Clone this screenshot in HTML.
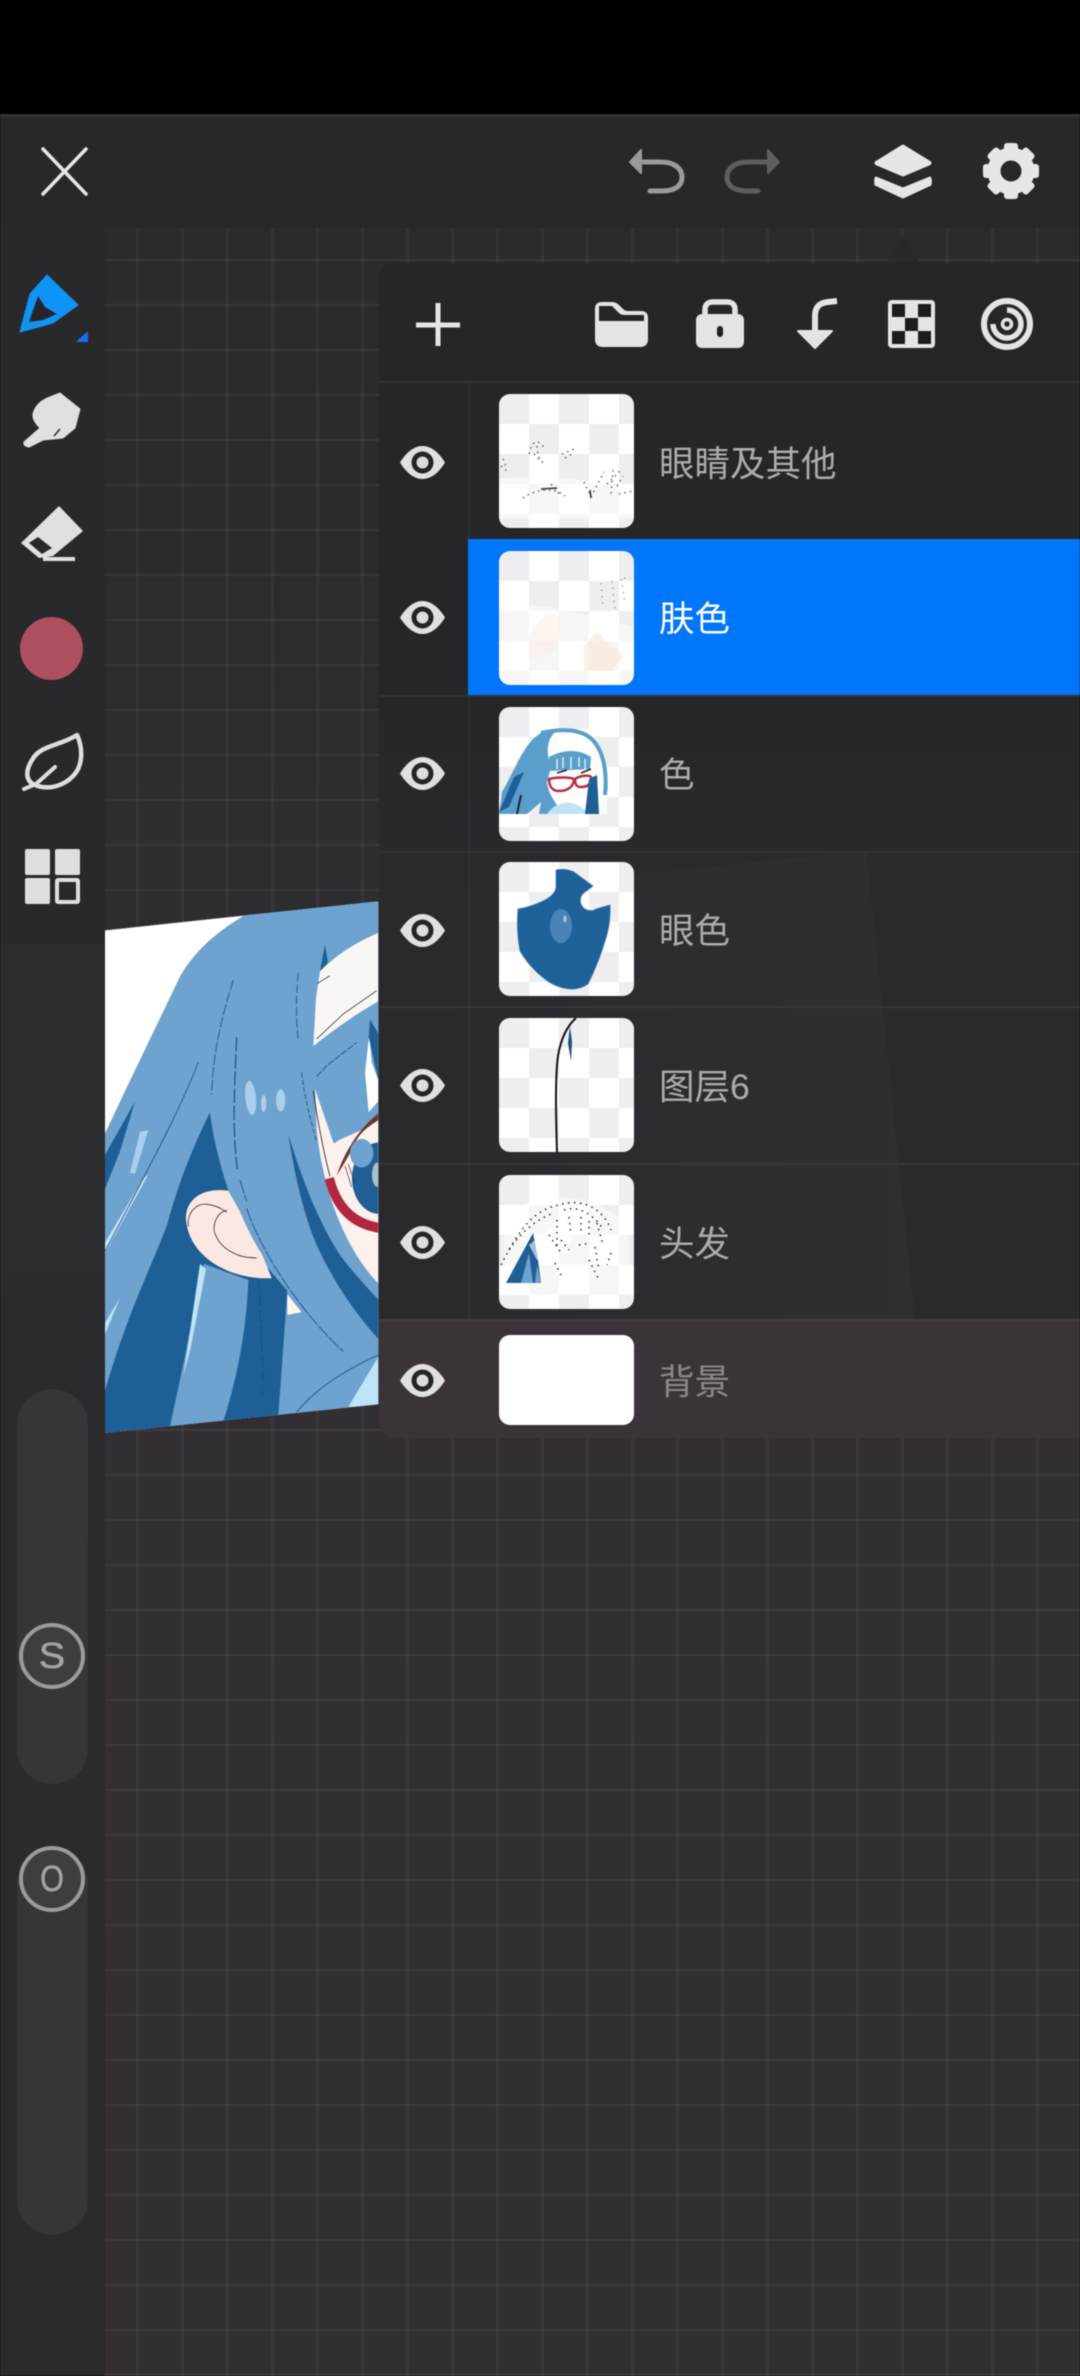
<!DOCTYPE html>
<html lang="zh"><head><meta charset="utf-8"><title>Layers</title>
<style>
html,body{margin:0;padding:0;background:#000}
#a{position:relative;width:1080px;height:2376px;overflow:hidden;background:#000;font-family:"Liberation Sans","Noto Sans CJK SC",sans-serif;filter:blur(.45px)}
.abs{position:absolute}
#canvas{left:105px;top:228px;width:975px;height:2148px;background-image:linear-gradient(180deg,#2b2b2b 0,#2d2c2e 600px,#322f33 1200px,#322e33 100%)}
#gridv{left:105px;top:228px;width:975px;height:2148px;
background-image:linear-gradient(90deg,rgba(255,255,255,.04) 0,rgba(255,255,255,.04) 3px,transparent 3px),linear-gradient(180deg,rgba(255,255,255,.05) 0,rgba(255,255,255,.05) 2px,transparent 2px);
background-size:45px 45px;background-position:31px 31px}
#top{left:0;top:114px;width:1080px;height:114px;background:#282828;border-top:3px solid #323232;box-sizing:border-box}
#side{left:0;top:228px;width:105px;height:2148px;background:linear-gradient(180deg,#29282a 0,#29282a 708px,#2c2b2d 722px,#2b2a2c 100%)}
.slider{left:17px;width:71px;background:#373539;border-radius:36px}
.knob{left:19px;width:58px;height:58px;border:4px solid #9b9a9c;border-radius:50%;background:#3e3d42;color:#a3a2a4;font-size:36px;line-height:58px;text-align:center;-webkit-text-stroke:.6px #a3a2a4}
#panel{left:379px;top:263px;width:701px;height:1175px;background:#262528;border-radius:14px 0 0 14px;overflow:hidden}
.sep{left:0;width:701px;height:2px;background:#323035}
.lab{left:659px;font-size:35.5px;line-height:44px;color:#adabae;white-space:nowrap}
.th{left:499px;width:135px;height:134px;border-radius:11px;overflow:hidden;background:conic-gradient(#fff 25%,#eeeef0 0 50%,#fff 0 75%,#eeeef0 0);background-size:60px 60px}
.th svg{display:block}
.eye{left:400px;width:45px;height:33px}
</style></head><body><div id="a">
<div class="abs" id="canvas"></div>
<div class="abs" id="gridv"></div>

<!-- artwork -->
<svg class="abs" style="left:100px;top:880px" width="300" height="560" viewBox="0 0 900 1568" preserveAspectRatio="none">
<defs><clipPath id="q"><path d="M15 140L835 60V1468L15 1548Z"/></clipPath></defs>
<g clip-path="url(#q)">
<path d="M0 0H900V1600H0Z" fill="#fff"/>
<path d="M435 98L835 55V1480L15 1560V710C100 540 200 350 240 270C290 190 360 140 435 98Z" fill="#6ea2cf"/>
<path d="M660 255C720 200 780 170 835 148V340C760 380 700 420 640 465L648 330Z" fill="#f9f6f6"/>
<path d="M675 180L660 255L684 232Z" fill="#1f5f94"/>
<path d="M650 445L730 375L830 310M652 290L690 268" stroke="#222" stroke-width="2" fill="none"/>
<path d="M808 430L795 540L806 650L835 620V560L815 510Z" fill="#fff"/>
<path d="M810 390L806 440L835 560V430Z" fill="#1f5f94"/>
<path d="M645 585L700 735L810 690L840 650V1135C740 1040 670 880 650 700Z" fill="#fdf1ee"/>
<ellipse cx="838" cy="835" rx="82" ry="100" fill="#1f5f94"/>
<path d="M710 828C730 770 770 700 840 650V670C790 695 765 725 750 765C735 790 722 810 710 828Z" fill="#6e3424"/>
<ellipse cx="785" cy="765" rx="35" ry="40" fill="#6ea2cf"/>
<ellipse cx="832" cy="825" rx="16" ry="34" fill="#a8bfd0"/>
<path d="M735 800L755 860M745 795L765 850" stroke="#333" stroke-width="2"/>
<path d="M688 835C705 900 745 962 840 974" stroke="#b0273f" stroke-width="28" fill="none"/>
<path d="M330 650C300 710 250 800 200 970C150 1090 80 1220 15 1430V1560L210 1530C240 1420 280 1200 312 1075L445 1120L370 1515L535 1498L562 1150L470 1050C410 950 350 800 330 650Z" fill="#1e5f95"/>
<path d="M445 1120L312 1085L210 1530L370 1515C410 1400 440 1260 445 1120Z" fill="#6ea2cf"/>
<path d="M300 1075L250 1390L272 1310L318 1090Z" fill="#bfe4f6"/>
<path d="M385 870C300 860 255 900 258 950C265 1050 380 1120 515 1115L470 1010Z" fill="#fce8e3"/>
<path d="M265 970C260 930 290 905 320 908C345 910 365 920 380 930M380 925C350 930 335 970 345 990C360 1030 410 1060 470 1058" stroke="#111" stroke-width="2" fill="none"/>
<path d="M562 1160L605 1210L562 1218Z" fill="#fdf6ec"/>
<path d="M330 650C340 740 380 850 430 950C490 1080 600 1200 730 1320L835 1340V1130C730 1030 680 930 650 760L645 580L600 400L400 350Z" fill="#6ea2cf"/>
<path d="M565 712C600 820 650 950 720 1050C760 1100 800 1140 840 1180V1290C750 1200 680 1090 640 1000C600 900 580 800 565 712Z" fill="#1e5f95"/>
<path d="M640 465L805 430L795 540L806 670L702 738L650 590Z" fill="#6ea2cf"/>
<path d="M15 770L105 620L60 760L15 865Z" fill="#1e5f95"/>
<path d="M145 700L120 705L90 820L105 822Z" fill="#a8cfec"/>
<ellipse cx="452" cy="610" rx="16" ry="48" fill="#a8cfec" transform="rotate(-6 452 610)"/>
<ellipse cx="491" cy="626" rx="8" ry="24" fill="#a8cfec"/>
<ellipse cx="542" cy="617" rx="14" ry="31" fill="#a8cfec"/>
<path d="M15 1015L130 835L145 825L15 1045ZM15 1240L60 1170L15 1272Z" fill="#bfe4f6"/>
<path d="M835 1335L745 1475H840Z" fill="#bfe4f6"/>
<g stroke="#1b4e80" stroke-width="2.5" fill="none">
<path d="M400 280C370 370 340 470 335 600" stroke-dasharray="30 6"/>
<path d="M410 440C405 560 395 690 412 810" stroke-dasharray="40 8" stroke-width="3.5"/>
<path d="M595 260C585 350 590 410 595 450" stroke-dasharray="24 8"/>
<path d="M605 540C615 620 635 680 650 735" stroke-dasharray="14 6"/>
<path d="M420 840L440 900M440 920C480 1030 590 1200 730 1320" stroke-dasharray="40 4"/>
<path d="M295 510C250 620 190 730 15 1040"/>
<path d="M835 1330C740 1370 650 1420 590 1490"/>
<path d="M478 1120C480 1250 490 1350 490 1440" stroke-dasharray="34 8" stroke-width="3"/>
<path d="M650 550L680 520L770 455" stroke-dasharray="20 4"/>
<path d="M640 590C650 660 670 760 690 830" stroke="#222"/>
<path d="M15 140L435 98" stroke="#333"/>
</g>
</g></svg>

<div class="abs" id="top"></div>
<div class="abs" id="side"></div>

<!-- panel pointer -->
<svg class="abs" style="left:880px;top:232px" width="46" height="32"><path d="M23 4L6 32H40Z" fill="#29282a"/></svg>

<div class="abs" id="panel">
 <div class="abs" style="left:0;top:0;width:701px;height:588px;background:linear-gradient(180deg,#262527 0,#262528 420px,#2a292d 588px)"></div>
 <svg class="abs" style="left:0;top:0" width="701" height="1175">
  <defs><linearGradient id="g1" x1="0" x2="1" y1="0" y2="0"><stop offset="0" stop-color="#2a292c"/><stop offset="1" stop-color="#312e32"/></linearGradient></defs>
  <path d="M0 588H701V1056H0Z" fill="#2c292d"/>
  <path d="M0 637L487 588L536 1056H0Z" fill="url(#g1)"/>
 </svg>
 <div class="abs" style="left:0;top:1056px;width:701px;height:119px;background:#3a343a"></div>
 <div class="abs" style="left:89px;top:120px;width:2px;height:936px;background:#302e33"></div>
 <div class="abs sep" style="top:118px"></div>
 <div class="abs sep" style="top:432px"></div>
 <div class="abs sep" style="top:588px"></div>
 <div class="abs sep" style="top:743px;background:#38363a"></div>
 <div class="abs sep" style="top:900px;background:#38363a"></div>
 <div class="abs sep" style="top:1056px;background:#403d42"></div>
</div>
<div class="abs" style="left:468px;top:539px;width:612px;height:156px;background:#0076fb"></div>

<!-- top icons -->
<svg class="abs" style="left:0;top:0" width="1080" height="380" fill="none">
 <path d="M43 149L86 194M86 149L43 194" stroke="#e6e6e6" stroke-width="3.5" stroke-linecap="round"/>
 <path d="M630 162L641 150V173Z" fill="#9a9a9a" stroke="#9a9a9a" stroke-width="2" stroke-linejoin="round"/>
 <path d="M640 162H661C675 162 682 169 682 177C682 186 675 191 661 191H650" stroke="#9a9a9a" stroke-width="5" stroke-linecap="round"/>
 <path d="M779 162L768 150V173Z" fill="#5e5e5e" stroke="#5e5e5e" stroke-width="2" stroke-linejoin="round"/>
 <path d="M769 162H748C734 162 727 169 727 177C727 186 734 191 748 191H758" stroke="#5e5e5e" stroke-width="5" stroke-linecap="round"/>
 <path d="M903 146L929 162Q931 163 929 164L903 175L877 164Q875 163 877 162Z" fill="#e6e6e6" stroke="#e6e6e6" stroke-width="3" stroke-linejoin="round"/>
 <path d="M876 177L903 188L930 177Q932 178 931 185L903 198L875 185Q874 178 876 177Z" fill="#e6e6e6" stroke="#e6e6e6" stroke-width="1" stroke-linejoin="round"/>
 <g transform="translate(1011 171)" fill="#e6e6e6">
  <circle r="17" fill="none" stroke="#e6e6e6" stroke-width="13"/>
  <rect x="-7" y="-28" width="14" height="10" rx="3"/>
  <rect x="-7" y="-28" width="14" height="10" rx="3" transform="rotate(45)"/>
  <rect x="-7" y="-28" width="14" height="10" rx="3" transform="rotate(90)"/>
  <rect x="-7" y="-28" width="14" height="10" rx="3" transform="rotate(135)"/>
  <rect x="-7" y="-28" width="14" height="10" rx="3" transform="rotate(180)"/>
  <rect x="-7" y="-28" width="14" height="10" rx="3" transform="rotate(225)"/>
  <rect x="-7" y="-28" width="14" height="10" rx="3" transform="rotate(270)"/>
  <rect x="-7" y="-28" width="14" height="10" rx="3" transform="rotate(315)"/>
 </g>
 <path d="M438 303V346M416 325H460" stroke="#e6e6e6" stroke-width="5"/>
 <path d="M595 309Q595 302 602 302H612Q616 302 619 305L623 309Q625 311 628 311H641Q648 311 648 318V339Q648 347 640 347H603Q595 347 595 339Z" fill="#e4e4e4"/>
 <path d="M599 306H612L619 313Q621 315 625 315H644V321H599Z" fill="#262527"/>
 <path d="M705 317V310Q705 302 713 302H727Q735 302 735 310V317" stroke="#e4e4e4" stroke-width="5.5"/>
 <rect x="696" y="314" width="48" height="34" rx="6" fill="#e4e4e4"/>
 <rect x="717" y="326" width="6" height="11" rx="3" fill="#1f1f20"/>
 <path d="M815 334V316Q815 303 828 302L837 301" stroke="#e4e4e4" stroke-width="6"/>
 <path d="M798 331H832L815 348Z" fill="#e4e4e4" stroke="#e4e4e4" stroke-width="2" stroke-linejoin="round"/>
 <rect x="888" y="300" width="47" height="48" rx="4" fill="#e4e4e4"/>
 <g fill="#1c1c1d"><rect x="892" y="304" width="13" height="13"/><rect x="918" y="304" width="13" height="13"/><rect x="905" y="318" width="13" height="13"/><rect x="892" y="331" width="13" height="13"/><rect x="918" y="331" width="13" height="13"/></g>
 <g stroke="#e4e4e4"><circle cx="1007" cy="324" r="23" stroke-width="6"/><path d="M1007 310A14 14 0 1 1 993 324" stroke-width="5.5"/><circle cx="1007" cy="324" r="4.5" stroke-width="3.5"/></g>
</svg>

<div class="abs slider" style="top:1389px;height:395px"></div>
<div class="abs slider" style="top:1848px;height:387px"></div>
<div class="abs knob" style="top:1623px"><span style="display:inline-block;transform:scaleX(1.1)">S</span></div>
<div class="abs knob" style="top:1846px"><span style="display:inline-block;transform:scaleX(.85)">O</span></div>

<!-- left tools -->
<svg class="abs" style="left:0;top:260px" width="105" height="660" viewBox="0 260 105 660">
 <path d="M47 275L78 305L53 323L20 332L30 294Z" fill="#0f93f5" stroke="#0f93f5" stroke-width="1" stroke-linejoin="round"/>
 <path d="M38 296L45 307L57 314L43 320L29 322Z" fill="#26262a"/>
 <path d="M88 331V342H76Z" fill="#1a6cf0"/>
 <path d="M60 393L80 409L75 428L63 438L43 440L29 447Q23 446 24 442L40 428Q32 420 33 414Q36 402 50 397Z" fill="#e0dfe1" stroke="#e0dfe1" stroke-width="1" stroke-linejoin="round"/>
 <path d="M60 429L54 436" stroke="#29282a" stroke-width="1.5"/>
 <path d="M59 506L83 531L53 556L39 558L21 543Z" fill="#e0dfe1"/>
 <path d="M29 543L38 537L52 548L42 554Z" fill="#29282a"/>
 <path d="M43 559H75" stroke="#e0dfe1" stroke-width="4"/>
 <circle cx="51.5" cy="648.5" r="31.5" fill="#ad4f5e"/>
 <path d="M77 735C60 746 40 745 32 760C24 773 27 782 35 785C50 791 65 785 74 775C83 765 83 748 77 735Z" fill="none" stroke="#dedddf" stroke-width="4.5" stroke-linejoin="round"/>
 <path d="M24 789L36 784L55 767" fill="none" stroke="#dedddf" stroke-width="4" stroke-linecap="round"/>
 <rect x="25" y="849" width="25" height="26" rx="2" fill="#dfdfe0"/><rect x="55" y="849" width="25" height="26" rx="2" fill="#dfdfe0"/>
 <rect x="25" y="878" width="25" height="26" rx="2" fill="#dfdfe0"/><rect x="57" y="880" width="21" height="22" rx="1" fill="none" stroke="#dfdfe0" stroke-width="4"/>
</svg>

<!-- eyes -->
<svg width="0" height="0" style="position:absolute"><defs><g id="e"><path d="M0 16.5C7 5 15 0 22.5 0C30 0 38 5 45 16.5C38 28 30 33 22.5 33C15 33 7 28 0 16.5Z" fill="#e0dfe1"/><circle cx="22.5" cy="16.5" r="11" fill="#252427"/><circle cx="22.5" cy="16.5" r="6" fill="#dcdbdd"/></g></defs></svg>
<svg class="abs eye" style="top:446px"><use href="#e"/></svg>
<svg class="abs eye" style="top:601px"><use href="#e"/></svg>
<svg class="abs eye" style="top:757px"><use href="#e"/></svg>
<svg class="abs eye" style="top:914px"><use href="#e"/></svg>
<svg class="abs eye" style="top:1069px"><use href="#e"/></svg>
<svg class="abs eye" style="top:1226px"><use href="#e"/></svg>
<svg class="abs eye" style="top:1364px"><use href="#e"/></svg>

<!-- thumbnails -->
<div class="abs th" style="top:394px"><svg width="135" height="134" fill="none" stroke="#333">
 <path d="M0 85C40 80 90 85 135 95V125H0Z" fill="#fff" opacity=".55" stroke="none"/>
 <g stroke-width="1.5" stroke-dasharray="1.5 4" opacity=".75">
 <path d="M30 60C33 45 40 45 46 55M38 52C38 62 42 68 46 70M35 60L42 68"/>
 <path d="M63 60L75 55M66 64L73 60"/>
 <path d="M4 65L8 75M2 72L9 78"/>
 <path d="M24 104C35 96 55 92 66 102M52 90L62 102"/>
 <path d="M85 88L92 103L105 78M108 90L122 76M114 76L112 100M118 92L124 82"/>
 <path d="M120 100L134 97"/>
 </g>
 <path d="M42 95L58 94M91 96L92 104" stroke-width="1.5"/>
 </svg></div>
<div class="abs th" style="top:551px"><svg width="135" height="134" fill="none">
 <path d="M0 55C40 50 70 60 135 75V134H0Z" fill="#fff" opacity=".45"/>
 <path d="M30 85C42 60 60 60 62 70L58 100L30 110Z" fill="#fbeee6" opacity=".6"/>
 <path d="M85 95C95 85 100 75 105 90L125 105L112 120H85Z" fill="#fbe6d4" opacity=".6"/>
 <g stroke="#777" stroke-width="1.5" stroke-dasharray="1.5 5" opacity=".6"><path d="M102 32L104 58M113 30L116 58M122 28L126 52"/><path d="M125 27H132"/></g>
 </svg></div>
<div class="abs th" style="top:707px"><svg width="135" height="134" fill="none">
 <path d="M40 22H92L108 60V107H50L48 30Z" fill="#fff" opacity=".85"/>
 <path d="M0 107L3 85C15 65 25 35 42 26L56 25C46 35 48 50 52 60L48 75C50 90 58 95 62 107H40L42 95L28 107Z" fill="#5a9fcb"/>
 <path d="M42 26C60 22 85 20 97 37C106 50 108 70 106 88" stroke="#5a9fcb" stroke-width="4"/>
 <path d="M50 50C65 42 80 42 92 50L91 62L50 64Z" fill="#5a9fcb"/>
 <path d="M58 52V62M64 50V61M72 50V62M80 50V60M86 52V62" stroke="#d8eefa" stroke-width="1.5"/>
 <path d="M50 72C58 70 70 70 75 72C75 80 68 84 60 84C54 84 50 80 50 72ZM76 72C82 68 90 68 92 70C92 78 88 80 82 80C78 80 76 78 76 72Z" stroke="#bd2b3e" stroke-width="2.5"/>
 <path d="M58 66L68 63M82 66L92 62" stroke="#222" stroke-width="1.5"/>
 <path d="M48 107C58 92 78 92 90 107Z" fill="#bfe3f5"/>
 <path d="M0 105L15 70L25 65L10 100ZM86 107L90 72L98 68L100 107Z" fill="#1e5f95"/>
 <path d="M18 107L22 88" stroke="#223" stroke-width="2"/>
 </svg></div>
<div class="abs th" style="top:862px"><svg width="135" height="134">
 <path d="M57 8Q66 6 75 10L94 24L86 30A9 9 0 0 0 97 47L111 43Q112 60 107 76Q100 100 89 122Q80 128 71 127Q58 126 47 118Q30 105 21 89Q17 68 19 47Q32 45 44 39Q55 34 57 26Z" fill="#1f6199" stroke="#3d7bb0" stroke-width=".7"/>
 <ellipse cx="62" cy="64" rx="11" ry="17" fill="#4a84b6"/><ellipse cx="66" cy="57" rx="1.5" ry="3.5" fill="#a9cbe6"/>
 </svg></div>
<div class="abs th" style="top:1018px"><svg width="135" height="134" fill="none">
 <path d="M77 0C68 8 62 20 59 38C56 60 57 100 58 134" stroke="#111" stroke-width="2"/>
 <path d="M71 8L69 25L72 43L73 24Z" fill="#1f4f7e"/>
 </svg></div>
<div class="abs th" style="top:1175px"><svg width="135" height="134" fill="none">
 <path d="M5 40C40 15 90 15 130 50V120H5Z" fill="#fff" opacity=".5"/>
 <path d="M7 108L34 58L38 78L42 108Z" fill="#1e5f95"/>
 <path d="M22 108L30 78L34 108ZM36 108L38 90L42 108Z" fill="#6ea2cf"/>
 <path d="M30 70L60 45L78 55L68 75L38 85Z" fill="#fff" opacity=".6"/>
 <g stroke="#2a2a2e" stroke-width="1.5" stroke-dasharray="1.5 4.5">
 <path d="M2 90C15 65 30 35 60 30C85 22 105 35 112 55"/>
 <path d="M10 75C20 60 35 45 55 38M65 35C80 30 95 40 105 55"/>
 <path d="M58 45V72M70 42L72 60M82 42V58M90 46V62M98 48L104 70"/>
 <path d="M50 60L62 78M62 65L70 75M80 70L92 68M96 72L100 95M112 78L108 90"/>
 <path d="M90 85L100 105M56 88L62 100"/>
 </g></svg></div>
<div class="abs" style="left:499px;top:1335px;width:135px;height:90px;background:#fff;border-radius:11px"></div>

<!-- labels -->
<div class="abs lab" style="top:442px">眼睛及其他</div>
<div class="abs lab" style="top:597px;color:#fff">肤色</div>
<div class="abs lab" style="top:753px">色</div>
<div class="abs lab" style="top:909px">眼色</div>
<div class="abs lab" style="top:1065px">图层6</div>
<div class="abs lab" style="top:1222px">头发</div>
<div class="abs lab" style="top:1360px;color:#8a888b">背景</div>
</div></body></html>
